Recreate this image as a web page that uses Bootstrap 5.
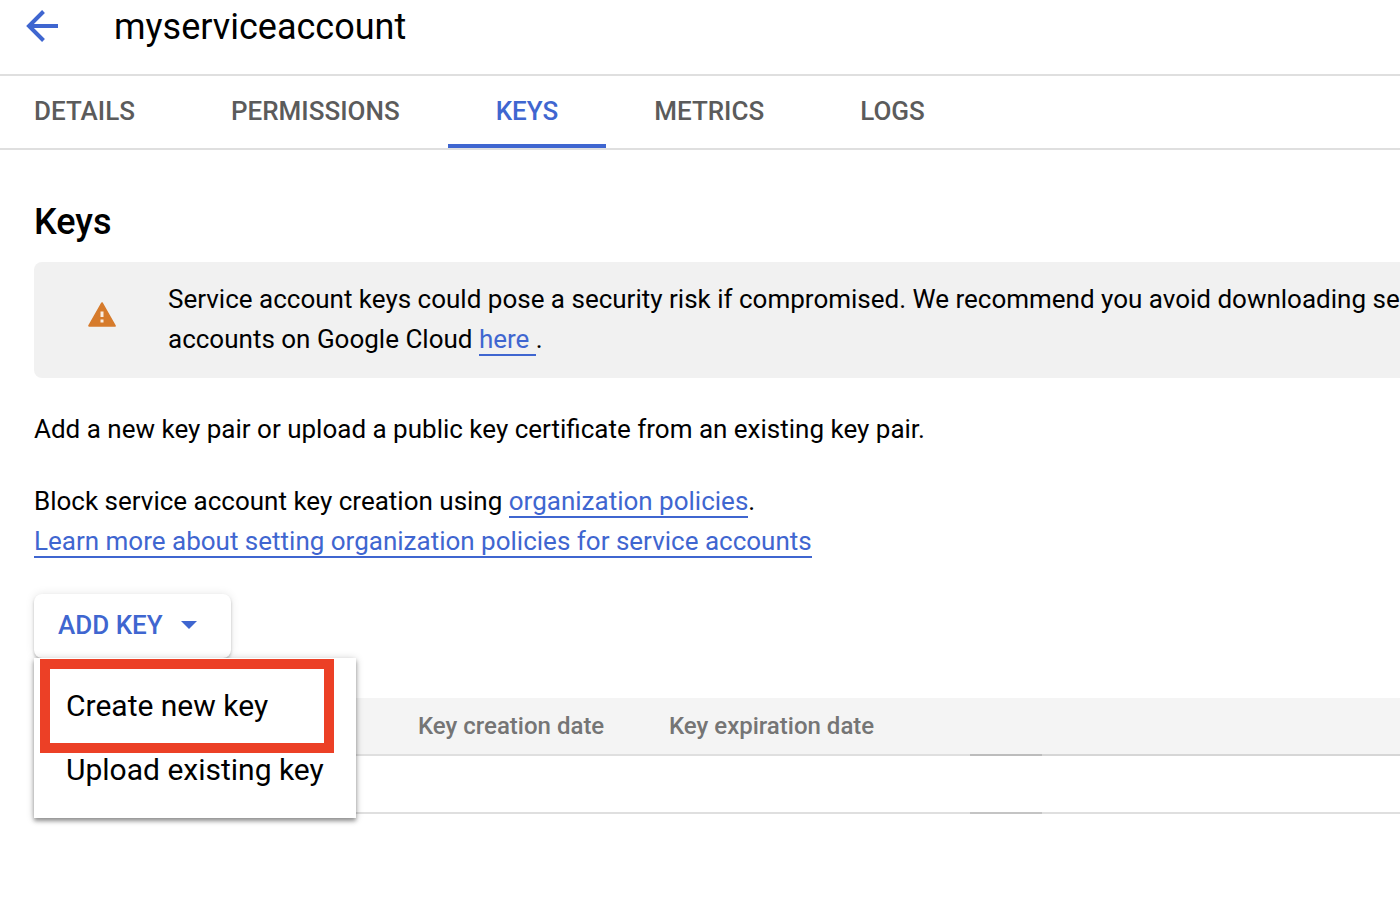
<!DOCTYPE html>
<html lang="en">
<head>
<meta charset="utf-8">
<meta name="viewport" content="width=device-width, initial-scale=1">
<title>myserviceaccount – Keys</title>
<link href="https://cdn.jsdelivr.net/npm/bootstrap@5.3.0/dist/css/bootstrap.min.css" rel="stylesheet">
<style>
:root { --brand: #3f66d0; --rule: #dfdfdf; }
body { font: 400 26px/40px Roboto, "Liberation Sans", sans-serif; color: #000; background: #fff; }
main a { color: var(--brand); text-decoration: none; border-bottom: 2px solid var(--brand); }
.page-header { height: 76px; padding: 0 26px 22px; gap: 56px; border-bottom: 2px solid var(--rule); }
.page-header h1 { font-size: 36px; line-height: 52px; font-weight: 400; padding-top: 2px; }
.back-btn { width: 32px; height: 32px; }
.tabs { border-bottom: 2px solid var(--rule); height: 74px; }
.tabs .nav-link { color: #5b5b5b; font-weight: 500; padding: 15px 48px 13px; border-bottom: 4px solid transparent; border-radius: 0; height: 72px; line-height: 40px; }
.tabs .nav-link:first-child { padding-left: 34px; }
.tabs .nav-link.active { color: var(--brand); border-color: var(--brand); }
main { padding: 48px 0 104px 34px; }
main h2 { font-size: 36px; line-height: 48px; font-weight: 500; margin-bottom: 16px; }
.notice { background: #f1f1f1; border-radius: 8px 0 0 8px; padding: 17px 0 19px 54px; gap: 52px; margin-bottom: 31px; }
.notice svg { margin-top: 23px; }
.notice p { white-space: nowrap; }
.intro { margin-bottom: 32px; }
.add-key { height: 64px; margin-top: 1px; padding: 0 34px 2px 24px; gap: 18px; border-radius: 8px; font-size: 26px; font-weight: 500; color: var(--brand); background: #fff; box-shadow: 0 2px 3px rgba(0,0,0,.22), 0 0 10px rgba(0,0,0,.1); }
.key-menu { top: 100%; left: 0; width: 322px; background: #fff; box-shadow: 0 3px 4px rgba(0,0,0,.35), 0 1px 8px rgba(0,0,0,.2); padding: 16px 0; }
.key-menu button { font-size: 30px; line-height: 64px; padding: 0 32px; color: #000; }
.highlight { left: 6px; top: 1px; width: 294px; height: 94px; border: 10px solid #ec4026; pointer-events: none; }
.key-table { margin-top: 40px; font-size: 24px; table-layout: fixed; border-collapse: separate; border-spacing: 0; }
.key-table th { height: 58px; font-weight: 500; color: #757575; background: #f4f4f4; border-bottom: 2px solid var(--rule); padding: 0; line-height: 56px; }
.key-table td { height: 58px; padding: 0; border-bottom: 2px solid var(--rule); }
.key-table th.action { border-bottom-color: #bcbcbc; }
.key-table td.action { border-bottom-color: #c4c4c4; }
.key-table .action + th { border-bottom-color: #d6d6d6; }
</style>
</head>
<body>
<header class="page-header d-flex align-items-center">
  <button class="back-btn btn border-0 p-0 d-flex" aria-label="Back">
    <svg width="32" height="32" viewBox="0 0 32 32" fill="none" stroke="#3f66d0" stroke-width="4"><path d="M32 16H4M17.500 1.500L3 16l14.500 14.500"/></svg>
  </button>
  <h1 class="mb-0">myserviceaccount</h1>
</header>
<nav class="tabs nav flex-nowrap">
  <a class="nav-link" href="#">DETAILS</a>
  <a class="nav-link" href="#">PERMISSIONS</a>
  <a class="nav-link active" href="#" aria-current="page">KEYS</a>
  <a class="nav-link" href="#">METRICS</a>
  <a class="nav-link" href="#">LOGS</a>
</nav>
<main>
  <h2>Keys</h2>
  <div class="notice d-flex align-items-start overflow-hidden">
    <svg class="flex-shrink-0" width="28" height="25" viewBox="0 0 28 25"><path d="M14 1.200L26.800 23.800H1.200z" fill="#d67b2c" stroke="#d67b2c" stroke-width="2" stroke-linejoin="round"/><path d="M14 9.500v5.500M14 17.500v3" stroke="#f8ede3" stroke-width="3"/></svg>
    <p class="m-0">Service account keys could pose a security risk if compromised. We recommend you avoid downloading se<br>accounts on Google Cloud <a href="#">here&nbsp;</a>.</p>
  </div>
  <p class="intro">Add a new key pair or upload a public key certificate from an existing key pair.</p>
  <p class="intro">Block service account key creation using <a href="#">organization policies</a>.<br><a href="#">Learn more about setting organization policies for service accounts</a></p>
  <div class="position-relative d-inline-block align-top">
    <button class="add-key btn border-0 d-flex align-items-center" aria-expanded="true">ADD KEY
      <svg width="16" height="8" viewBox="0 0 16 8"><path d="M0 0h16L8 8z" fill="#3f66d0"/></svg>
    </button>
    <div class="key-menu position-absolute z-3">
      <button class="btn border-0 rounded-0 w-100 text-start">Create new key</button>
      <button class="btn border-0 rounded-0 w-100 text-start">Upload existing key</button>
      <div class="highlight position-absolute"></div>
    </div>
  </div>
  <table class="key-table w-100">
    <colgroup><col style="width:384px"><col style="width:251px"><col style="width:301px"><col style="width:72px"><col></colgroup>
    <thead><tr><th></th><th>Key creation date</th><th>Key expiration date</th><th class="action"></th><th></th></tr></thead>
    <tbody><tr><td></td><td></td><td></td><td class="action"></td><td></td></tr></tbody>
  </table>
</main>
<script src="https://cdn.jsdelivr.net/npm/bootstrap@5.3.0/dist/js/bootstrap.bundle.min.js"></script>
</body>
</html>
